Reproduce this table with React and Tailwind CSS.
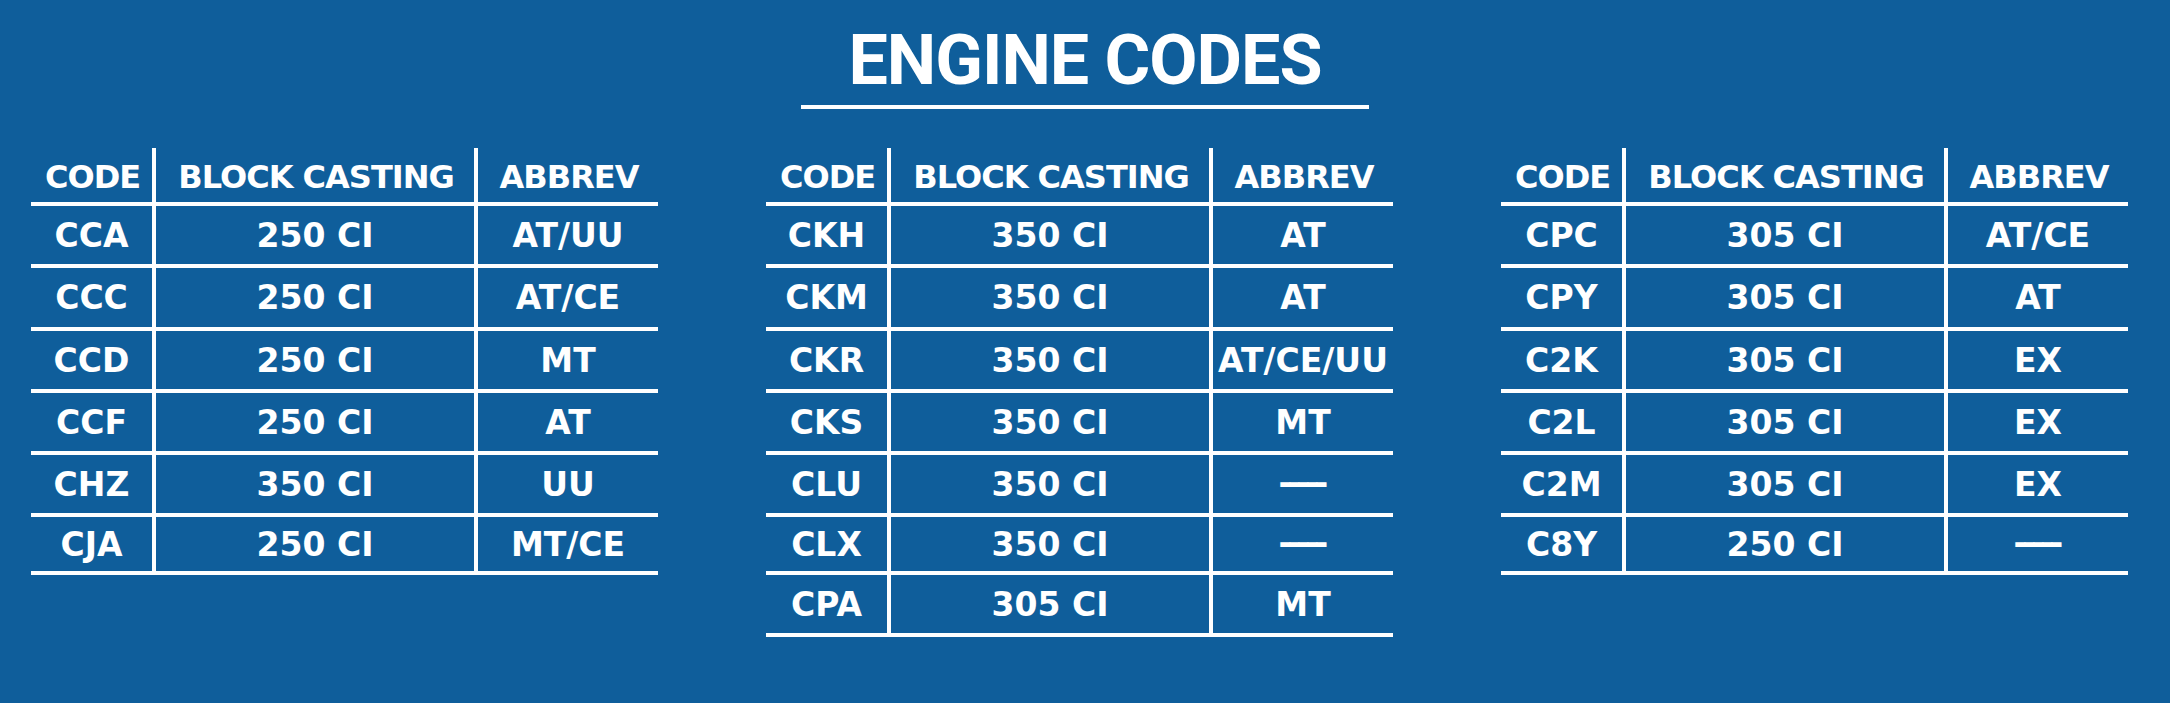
import React from "react";

const tables = [
  [
    ["CCA", "250 CI", "AT/UU"],
    ["CCC", "250 CI", "AT/CE"],
    ["CCD", "250 CI", "MT"],
    ["CCF", "250 CI", "AT"],
    ["CHZ", "350 CI", "UU"],
    ["CJA", "250 CI", "MT/CE"],
  ],
  [
    ["CKH", "350 CI", "AT"],
    ["CKM", "350 CI", "AT"],
    ["CKR", "350 CI", "AT/CE/UU"],
    ["CKS", "350 CI", "MT"],
    ["CLU", "350 CI", "-----"],
    ["CLX", "350 CI", "-----"],
    ["CPA", "305 CI", "MT"],
  ],
  [
    ["CPC", "305 CI", "AT/CE"],
    ["CPY", "305 CI", "AT"],
    ["C2K", "305 CI", "EX"],
    ["C2L", "305 CI", "EX"],
    ["C2M", "305 CI", "EX"],
    ["C8Y", "250 CI", "-----"],
  ],
];

const rowHeights = [
  "h-[62px]",
  "h-[63px]",
  "h-[62px]",
  "h-[62px]",
  "h-[62px]",
  "h-[58px]",
  "h-[62px]",
];

const colClasses = [
  "w-[125px] border-r-4",
  "w-[322px] border-r-4",
  "w-[180px]",
];

function CellText({ children }) {
  if (children === "-----") {
    return (
      <span className="tracking-[-4.7px] pr-[4px] -translate-y-[2px] inline-block">
        -----
      </span>
    );
  }
  return <span>{children}</span>;
}

function Table({ rows }) {
  return (
    <div className="w-[627px] flex flex-col text-white font-bold [font-family:'DejaVu_Sans',sans-serif]">
      <div className="flex h-[58px]">
        {["CODE", "BLOCK CASTING", "ABBREV"].map((h, i) => (
          <div
            key={h}
            className={`${colClasses[i]} border-b-4 border-white flex items-center justify-center pt-[3px] pl-[2px] text-[32px] leading-none tracking-[-1px] whitespace-nowrap`}
          >
            {h}
          </div>
        ))}
      </div>
      {rows.map((r, ri) => (
        <div key={ri} className={`flex ${rowHeights[ri]}`}>
          {r.map((c, ci) => (
            <div
              key={ci}
              className={`${colClasses[ci]} border-b-4 border-white flex items-center justify-center text-[33px] leading-none whitespace-nowrap`}
            >
              <CellText>{c}</CellText>
            </div>
          ))}
        </div>
      ))}
    </div>
  );
}

export default function App() {
  return (
    <div className="w-[2170px] h-[703px] bg-[#0f5e9b] overflow-hidden">
      <div className="flex flex-col items-center pt-[25px]">
        <h1 className="text-[70px] leading-[70px] font-bold text-white tracking-[-1px] [font-family:Roboto,sans-serif]">
          ENGINE CODES
        </h1>
        <div className="mt-[10px] w-[568px] h-[4px] bg-white" />
      </div>
      <div className="flex items-start pl-[31px] gap-[108px] mt-[39px]">
        {tables.map((t, i) => (
          <Table key={i} rows={t} />
        ))}
      </div>
    </div>
  );
}
